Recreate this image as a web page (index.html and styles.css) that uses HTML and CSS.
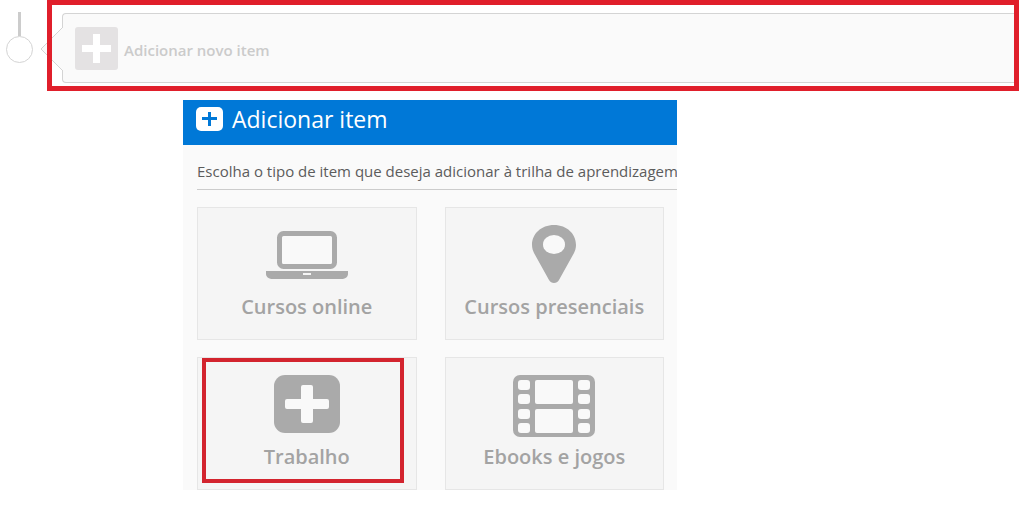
FILE: index.html
```
<!DOCTYPE html>
<html lang="pt-BR">
<head>
    <meta charset="UTF-8">
    <meta name="viewport" content="width=device-width, initial-scale=1.0">
    <title>Adicionar item</title>
    <link rel="stylesheet" href="styles.css">
</head>
<body>
    <div class="timeline">
        <div class="marker"></div>
        <div class="entry highlight">
            <button class="new-item">
                <svg class="arrow" viewBox="0 0 24 46" aria-hidden="true">
                    <path d="M23 1 1 23l22 22" fill="#fafafa" stroke="#d4d4d4"/>
                </svg>
                <svg class="new-icon" viewBox="0 0 43 43" aria-hidden="true">
                    <rect width="43" height="43" rx="3" fill="#e4e2e3"/>
                    <path d="M18 7h7v11h11v7H25v11h-7V25H7v-7h11z" fill="#fff"/>
                </svg>
                <span>Adicionar novo item</span>
            </button>
        </div>
    </div>

    <main class="panel">
        <h1 class="panel-title">
            <svg class="title-icon" viewBox="0 0 27 24" aria-hidden="true">
                <rect width="27" height="24" rx="5" fill="#fff"/>
                <path d="M12 5h3v5h6v3h-6v6h-3v-6H6v-3h6z" fill="#0078d7"/>
            </svg>
            Adicionar item
        </h1>
        <div class="panel-body">
            <p class="intro">Escolha o tipo de item que deseja adicionar à trilha de aprendizagem</p>
            <div class="cards">
                <button class="card">
                    <svg class="card-icon" viewBox="0 0 82 62" aria-hidden="true">
                        <rect x="13.5" y="8.5" width="55" height="33" rx="4" fill="#f9f9f9" stroke="#aaa" stroke-width="5"/>
                        <path d="M0 46h82v3c0 3-3 5-7 5H7c-4 0-7-2-7-5z" fill="#aaa"/>
                        <rect x="37" y="48" width="8" height="2" fill="#f5f5f5"/>
                    </svg>
                    <span>Cursos online</span>
                </button>
                <button class="card">
                    <svg class="card-icon" viewBox="0 0 82 62" aria-hidden="true">
                        <path fill="#aaa" d="M41 0C28 0 19 9 19 20c0 3 1 6 2 8l15 27c2 4 8 4 10 0l15-27c1-2 2-5 2-8C63 9 54 0 41 0z"/>
                        <ellipse cx="41" cy="19.5" rx="11" ry="9.5" fill="#f9f9f9"/>
                    </svg>
                    <span>Cursos presenciais</span>
                </button>
                <button class="card selected">
                    <svg class="card-icon" viewBox="0 0 82 62" aria-hidden="true">
                        <rect x="8" width="66" height="58" rx="11" fill="#aaa"/>
                        <path d="M37 10h8q2 0 2 2v12h14q2 0 2 2v6q0 2-2 2H47v12q0 2-2 2h-8q-2 0-2-2V34H21q-2 0-2-2v-6q0-2 2-2h14V12q0-2 2-2z" fill="#f9f9f9"/>
                    </svg>
                    <span>Trabalho</span>
                </button>
                <button class="card">
                    <svg class="card-icon" viewBox="0 0 82 62" aria-hidden="true">
                        <rect width="82" height="62" rx="7" fill="#aaa"/>
                        <g fill="#f9f9f9">
                            <rect x="22" y="5" width="38" height="24" rx="2"/>
                            <rect x="22" y="34" width="38" height="24" rx="2"/>
                            <rect x="5" y="5" width="12" height="10" rx="3"/>
                            <rect x="5" y="19" width="12" height="10" rx="3"/>
                            <rect x="5" y="34" width="12" height="10" rx="3"/>
                            <rect x="5" y="48" width="12" height="10" rx="3"/>
                            <rect x="65" y="5" width="12" height="10" rx="3"/>
                            <rect x="65" y="19" width="12" height="10" rx="3"/>
                            <rect x="65" y="34" width="12" height="10" rx="3"/>
                            <rect x="65" y="48" width="12" height="10" rx="3"/>
                        </g>
                    </svg>
                    <span>Ebooks e jogos</span>
                </button>
            </div>
        </div>
    </main>
</body>
</html>
```
FILE: styles.css
```
* {
    box-sizing: border-box;
}

body {
    margin: 0;
    background-color: #fff;
    font-family: "Open Sans", "Noto Sans", sans-serif;
}

button {
    font-family: inherit;
    cursor: pointer;
}

.timeline {
    display: flex;
    padding-right: 5px;
}

.marker {
    display: flex;
    flex-direction: column;
    align-items: center;
    width: 47px;
    padding: 12px 9px 0 0;
}

.marker::before {
    content: "";
    width: 3px;
    height: 24px;
    background-color: #ccc;
}

.marker::after {
    content: "";
    width: 25px;
    height: 25px;
    border: 1px solid #d4d4d4;
    border-radius: 50%;
}

.entry {
    position: relative;
    flex: 1;
    padding: 13px 5px 8px 15px;
}

/* red frame drawn over the content */
.highlight::after {
    content: "";
    position: absolute;
    inset: 0;
    border: 5px solid #e01f2b;
    pointer-events: none;
}

.new-item {
    position: relative;
    display: flex;
    align-items: center;
    gap: 6px;
    width: 100%;
    height: 70px;
    padding: 0 12px;
    border: 1px solid #d4d4d4;
    border-right: none;
    border-radius: 4px 0 0 4px;
    background-color: #fafafa;
    color: #cbcbcb;
    font-size: 15px;
    font-weight: 600;
}

.new-item span {
    padding-top: 4px;
}

.arrow {
    position: absolute;
    top: 12px;
    left: -23px;
    width: 24px;
    height: 46px;
}

.new-icon {
    width: 43px;
    height: 43px;
}

.panel {
    max-width: 494px;
    margin: 9px 0 0 183px;
    background-color: #fafafa;
    overflow: hidden;
}

.panel-title {
    display: flex;
    align-items: center;
    gap: 9px;
    height: 45px;
    margin: 0;
    padding: 0 13px 8px;
    background-color: #0078d7;
    color: #fff;
    font-size: 23px;
    font-weight: 400;
}

.title-icon {
    width: 27px;
    height: 24px;
}

.panel-body {
    padding-left: 14px;
}

.intro {
    margin: 0 0 17px;
    padding: 15px 0 7px;
    border-bottom: 1px solid #ccc;
    color: #5c5c5c;
    font-size: 15px;
    line-height: 22px;
    white-space: nowrap;
    overflow: hidden;
}

.cards {
    display: grid;
    grid-template-columns: 1fr 1fr;
    gap: 17px 28px;
    padding-right: 13px;
}

.card {
    position: relative;
    display: flex;
    flex-direction: column;
    align-items: center;
    gap: 6px;
    height: 133px;
    padding: 17px 0 0;
    border: 1px solid #e6e6e6;
    background-color: #f5f5f5;
    color: #a3a3a3;
    font-size: 20px;
    font-weight: 600;
    line-height: 28px;
}

.card-icon {
    width: 82px;
    height: 62px;
}

.selected::after {
    content: "";
    position: absolute;
    inset: 0 12px 6px 4px;
    border: 4px solid #d3242e;
}
```
